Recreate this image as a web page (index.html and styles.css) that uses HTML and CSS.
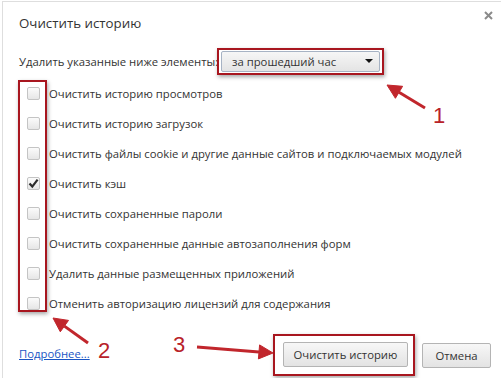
FILE: index.html
```html
<!DOCTYPE html>
<html lang="ru">
<head>
    <meta charset="UTF-8">
    <title>Очистить историю</title>
    <link rel="stylesheet" href="styles.css">
</head>
<body>

<div class="dialog">
    <div class="dialog-header">
        <h1 class="dialog-title">Очистить историю</h1>
        <svg class="close-icon" width="9" height="9" viewBox="0 0 9 9">
            <path d="M1 1 L8 8 M8 1 L1 8" stroke="#8a8a8a" stroke-width="2"/>
        </svg>
    </div>

    <div class="range-row">
        <span class="range-label">Удалить указанные ниже элементы:</span>
        <div class="mark mark-select">
            <div class="select-box">
                <span>за прошедший час</span>
                <span class="select-arrow"></span>
            </div>
        </div>
    </div>

    <div class="options">
        <div class="mark-column"></div>
        <label class="option"><span class="checkbox"></span>Очистить историю просмотров</label>
        <label class="option"><span class="checkbox"></span>Очистить историю загрузок</label>
        <label class="option"><span class="checkbox"></span>Очистить файлы cookie и другие данные сайтов и подключаемых модулей</label>
        <label class="option">
            <span class="checkbox">
                <svg width="11" height="11" viewBox="0 0 11 11"><path d="M1.5 5.5 L4.3 8.6 L9.6 1.6" fill="none" stroke="#2b2b2b" stroke-width="2.2"/></svg>
            </span>Очистить кэш
        </label>
        <label class="option"><span class="checkbox"></span>Очистить сохраненные пароли</label>
        <label class="option"><span class="checkbox"></span>Очистить сохраненные данные автозаполнения форм</label>
        <label class="option"><span class="checkbox"></span>Удалить данные размещенных приложений</label>
        <label class="option"><span class="checkbox"></span>Отменить авторизацию лицензий для содержания</label>
    </div>

    <div class="dialog-footer">
        <a class="more-link" href="#">Подробнее...</a>
        <div class="mark mark-button">
            <button class="btn">Очистить историю</button>
        </div>
        <button class="btn btn-cancel">Отмена</button>
    </div>
</div>

<!-- annotation arrows and numbers -->
<svg class="arrows" width="501" height="378" viewBox="0 0 501 378">
    <g fill="#c1262c" stroke="#c1262c">
        <line x1="425" y1="108" x2="399" y2="92.3" stroke-width="3"/>
        <polygon points="387,85 402.6,86.3 395.4,98.3" stroke-width="1"/>
        <line x1="88" y1="343" x2="64.4" y2="326.1" stroke-width="3"/>
        <polygon points="53,318 68.5,320.4 60.3,331.8" stroke-width="1"/>
        <line x1="197" y1="347" x2="259" y2="351.9" stroke-width="3"/>
        <polygon points="273,353 258.4,358.9 259.6,344.9" stroke-width="1"/>
    </g>
</svg>
<span class="step step-1">1</span>
<span class="step step-2">2</span>
<span class="step step-3">3</span>

</body>
</html>
```

FILE: styles.css
```css
html, body {
    margin: 0;
    padding: 0;
    background-color: #fff;
    overflow: hidden;
}
body {
    position: relative;
    width: 501px;
    height: 378px;
    font-family: "Open Sans", "Noto Sans", sans-serif;
    font-size: 11.3px;
    color: #333;
}
.dialog {
    margin: 1px 0 0 2px;
    height: 377px;
    border-top: 1px solid #dedede;
    border-left: 1px solid #dedede;
    padding-left: 16px;
    box-sizing: border-box;
}
.dialog-header {
    display: flex;
    justify-content: space-between;
    align-items: flex-start;
    height: 42px;
}
.dialog-title {
    margin: 11px 0 0 0;
    font-size: 13.3px;
    font-weight: normal;
    line-height: 20px;
    color: #333;
}
.close-icon {
    margin: 9px 8px 0 0;
}
.range-row {
    display: flex;
    align-items: center;
    height: 34px;
}
.range-label {
    width: 198px;
    white-space: nowrap;
}
/* red annotation frames */
.mark {
    border: 2px solid #a8161f;
    box-shadow: 1px 2px 4px rgba(0, 0, 0, 0.35);
}
.mark-select {
    padding: 1px 2px;
}
.select-box {
    display: flex;
    justify-content: space-between;
    align-items: center;
    width: 159px;
    height: 21px;
    padding: 0 6px 0 10px;
    box-sizing: border-box;
    border: 1px solid #a7b3c4;
    border-radius: 2px;
    background: linear-gradient(#f6f6f6, #e4e4e4);
}
.select-arrow {
    width: 0;
    height: 0;
    border-left: 4px solid transparent;
    border-right: 4px solid transparent;
    border-top: 4px solid #111;
}
.options {
    position: relative;
}
.mark-column {
    position: absolute;
    left: -1px;
    top: 2px;
    width: 25px;
    height: 228px;
    border: 2px solid #a8161f;
    box-shadow: 1px 2px 4px rgba(0, 0, 0, 0.35);
}
.option {
    display: flex;
    align-items: center;
    height: 30px;
    white-space: nowrap;
}
.checkbox {
    display: flex;
    align-items: center;
    justify-content: center;
    width: 13px;
    height: 13px;
    margin: 0 9px 0 8px;
    box-sizing: border-box;
    border: 1px solid #c4c4c4;
    border-radius: 2px;
    background: linear-gradient(#fbfbfb, #e6e6e6);
}
.dialog-footer {
    display: flex;
    align-items: center;
    margin-top: 16px;
}
.more-link {
    margin-right: auto;
    margin-top: -3px;
    color: #1a55c4;
    text-decoration: underline;
}
.mark-button {
    padding: 6px 5px 7px 8px;
    margin-right: 7px;
}
.btn {
    display: block;
    height: 25px;
    padding: 0;
    width: 125px;
    font-family: inherit;
    font-size: 11.3px;
    color: #333;
    border: 1px solid #b4b4b4;
    border-radius: 2px;
    background: linear-gradient(#f7f7f7, #e3e3e3);
}
.btn-cancel {
    width: 69px;
    margin-right: 10px;
}
.arrows {
    position: absolute;
    left: 0;
    top: 0;
    pointer-events: none;
}
.step {
    position: absolute;
    font-family: "Liberation Sans", Arial, sans-serif;
    font-size: 22px;
    line-height: 22px;
    color: #b82229;
}
.step-1 {
    left: 433px;
    top: 105px;
}
.step-2 {
    left: 98px;
    top: 340px;
}
.step-3 {
    left: 173px;
    top: 334px;
}
```
